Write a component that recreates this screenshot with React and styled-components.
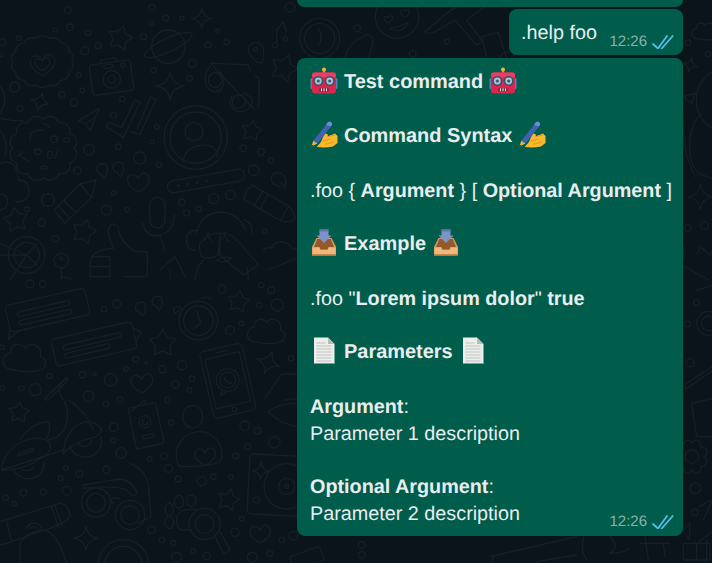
import React from 'react';
import styled, { createGlobalStyle } from 'styled-components';

const Global = createGlobalStyle`
  html, body { margin: 0; padding: 0; height: 100%; background: #0b141a; overflow: hidden; }
  #root { height: 100%; }
`;
const Page = styled.div`
  position: relative; width: 712px; height: 563px; overflow: hidden; background: #0b141a;
  font-family: "Liberation Sans", Arial, sans-serif; text-rendering: geometricPrecision;
`;
const Wall = styled.svg`
  position: absolute; inset: 0; width: 712px; height: 563px;
`;
const Thread = styled.div`
  position: relative; height: 100%; box-sizing: border-box; padding-right: 29px;
  display: flex; flex-direction: column; align-items: flex-end;
`;
const Stub = styled.div`
  width: 386px; height: 7px; background: #005c4b; border-radius: 0 0 8px 8px; margin-bottom: 2px;
`;
const Bubble = styled.div`
  position: relative; box-sizing: border-box; background: #005c4b; color: #e9edef;
  border-radius: 8px; font-size: 19.8px; line-height: 27px; white-space: nowrap;
  width: ${p => p.$w}px; height: ${p => p.$h}px; padding: ${p => p.$pad};
  margin-bottom: 3px;
`;
const TextLine = styled.div`
  height: 27px; line-height: 27px; white-space: pre;
`;
const Heading = styled.div`
  height: 27px; line-height: 27px; display: flex; align-items: center; gap: 6px;
  font-size: 19.95px; font-weight: 700; white-space: pre;
`;
const Blank = styled.div`height: ${p => p.$h || 27}px;`;
const B = styled.b`font-weight: 700;`;
const Meta = styled.div`
  position: absolute; right: 9px; bottom: ${p => p.$bottom}px; display: flex; align-items: center; gap: 5px;
  font-size: 15px; line-height: 16px; color: rgba(233, 237, 239, 0.6);
`;
const Doodles = styled.g`
  fill: none; stroke: #161f26; stroke-width: 4; stroke-linecap: round; stroke-linejoin: round;
`;
const Emoji = styled.svg`
  display: block; flex: none; width: 28px; height: 27px; margin-top: -4px;
`;

const Ticks = () => (
  <svg width="22" height="14" viewBox="0 0 22 14" fill="none" stroke="#53bdeb" strokeWidth="1.8" strokeLinecap="round" strokeLinejoin="round">
    <path d="M1 9 6 13.500 15 1" />
    <path d="M9.700 13.500 20.700 1" />
  </svg>
);

const Robot = () => (
  <Emoji viewBox="0 0 28 27">
    <rect x="0.500" y="11" width="3" height="11" rx="1.500" fill="#5b7fb8" />
    <rect x="24.500" y="11" width="3" height="11" rx="1.500" fill="#5b7fb8" />
    <rect x="12.800" y="3" width="2.400" height="4" fill="#8a9aa8" />
    <circle cx="14" cy="2.400" r="2" fill="#f5b62e" />
    <rect x="2" y="5.500" width="24" height="21" rx="3" fill="#d9264f" />
    <rect x="2" y="5.500" width="24" height="5" rx="2.500" fill="#ea3f63" />
    <circle cx="8.300" cy="14" r="5" fill="#3c4f68" />
    <circle cx="19.700" cy="14" r="5" fill="#3c4f68" />
    <circle cx="8.300" cy="14" r="3.400" fill="#a9c4d4" />
    <circle cx="19.700" cy="14" r="3.400" fill="#a9c4d4" />
    <circle cx="8.300" cy="14" r="1.600" fill="#3e5a70" />
    <circle cx="19.700" cy="14" r="1.600" fill="#3e5a70" />
    <rect x="9.500" y="21" width="9" height="3.400" rx="1" fill="#6d1733" />
    <path d="M11.500 21.300v3M14 21.300v3M16.500 21.300v3" stroke="#e9dde0" strokeWidth="1.200" />
  </Emoji>
);

const Writing = () => (
  <Emoji viewBox="0 0 28 27">
    <path d="M1 26 3.500 19.500 7.500 22.500Z" fill="#e8b33a" />
    <path d="M1 26 1.800 23.500 3.200 24.800Z" fill="#2a2a40" />
    <path d="M3.500 19.500 17 2.500 21 5.500 7.500 22.500Z" fill="#3d63b0" />
    <path d="M16 3.700 18 1.200Q19.500 0 21 1.200T22 4L20.600 5.500Z" fill="#6b8fd0" />
    <path d="M7 25.500 11 21 13 16 15.500 12.500 18 13.500 17.500 15.500 25 12.500 27.500 15 27.500 22 23 25.500Q15 27 7 26Z" fill="#fbb82c" />
    <path d="M13 20 21 18M15 23.500 24 21M18 15.500 25 14" stroke="#e39a1a" strokeWidth="1" fill="none" />
  </Emoji>
);

const Inbox = () => (
  <Emoji viewBox="0 0 28 27">
    <path d="M6.500 9H21.500L26 18V27H2V18Z" fill="#d99a5a" />
    <path d="M7.300 10H20.700L24 18H18.500L17.500 20.500H10.500L9.500 18H4Z" fill="#93592b" />
    <path d="M9.500 0.500H18.500V6.500H21.500L14 14 6.500 6.500H9.500Z" fill="#7e93c8" />
    <path d="M9.500 .500H18.500V2.500H9.500Z" fill="#5f74ad" />
    <path d="M2.500 18.500H9.200L10.200 21H17.800L18.800 18.500H25.500V25H2.500Z" fill="#eeb77c" />
    <path d="M2 25.500H26V27H2Z" fill="#b5743c" />
  </Emoji>
);

const PageIcon = () => (
  <Emoji viewBox="0 0 28 27">
    <path d="M4 0.500H18L24.500 7V27H4Z" fill="#eceeec" />
    <path d="M18 .5 24.500 7H18Z" fill="#b7bbb8" />
    <path d="M6.500 6h9M6.500 9h15M6.500 12h15M6.500 15h15M6.500 18h15M6.500 21h15M6.500 24h15" stroke="#bfc3c0" strokeWidth="1" />
    <path d="M4 26.500H24.500" stroke="#8f9490" strokeWidth="1" />
  </Emoji>
);

/* wallpaper helpers, all coordinates are in 1/3 px */
const scallop = (cx, cy, rx, ry, n) => {
  let d = '';
  for (let i = 0; i < n; i++) {
    const a = (i / n) * Math.PI * 2;
    const x = cx + rx * Math.cos(a), y = cy + ry * Math.sin(a);
    if (i === 0) d += `M${x} ${y}`;
    else d += `A${rx * 0.3} ${ry * 0.3} 0 0 1 ${x} ${y}`;
  }
  return d + `A${rx * 0.3} ${ry * 0.3} 0 0 1 ${cx + rx} ${cy}Z`;
};
const star = (cx, cy, r, rot = 0) => {
  let d = '';
  for (let i = 0; i < 10; i++) {
    const a = ((i * 36 - 90 + rot) * Math.PI) / 180;
    const q = i % 2 ? r * 0.55 : r;
    d += `${i ? 'L' : 'M'}${(cx + q * Math.cos(a)).toFixed(1)} ${(cy + q * Math.sin(a)).toFixed(1)}`;
  }
  return d + 'Z';
};
const spark = (cx, cy, r, rot = 0) => {
  const pt = (a, q) => {
    const t = ((a + rot) * Math.PI) / 180;
    return `${(cx + q * Math.cos(t)).toFixed(1)} ${(cy + q * Math.sin(t)).toFixed(1)}`;
  };
  return `M${pt(0, r)}Q${pt(45, r * 0.18)} ${pt(90, r)}Q${pt(135, r * 0.18)} ${pt(180, r)}Q${pt(225, r * 0.18)} ${pt(270, r)}Q${pt(315, r * 0.18)} ${pt(0, r)}Z`;
};
const heart = (x, y, s) =>
  `M${x} ${y + s * 0.9}C${x - s * 1.5} ${y + s * 0.1} ${x - s * 1.1} ${y - s} ${x - s * 0.3} ${y - s * 0.7}Q${x - s * 0.1} ${y - s * 0.6} ${x} ${y - s * 0.35}Q${x + s * 0.3} ${y - s * 1.1} ${x + s * 0.8} ${y - s * 0.8}C${x + s * 1.3} ${y - s * 0.4} ${x + s} ${y + s * 0.4} ${x} ${y + s * 0.9}Z`;
const cloud = (x, y, s) =>
  `M${x - s} ${y + s * 0.6}C${x - s * 1.5} ${y + s * 0.3} ${x - s * 1.2} ${y - s * 0.3} ${x - s * 0.8} ${y - s * 0.3}C${x - s * 0.9} ${y - s * 0.9} ${x - s * 0.2} ${y - s * 0.9} ${x} ${y - s * 0.6}C${x + s * 0.3} ${y - s} ${x + s} ${y - s * 0.8} ${x + s * 0.9} ${y - s * 0.1}C${x + s * 1.3} ${y} ${x + s * 1.3} ${y + s * 0.6} ${x + s * 0.8} ${y + s * 0.7}Q${x} ${y + s * 0.9} ${x - s} ${y + s * 0.6}Z`;
const quote = (x, y, s) =>
  `M${x} ${y + s}C${x - s * 1.1} ${y + s * 0.8} ${x - s * 1.1} ${y - s * 0.7} ${x + s * 0.2} ${y - s * 0.8}C${x + s * 1.2} ${y - s * 0.8} ${x + s * 1.1} ${y + s * 0.6} ${x + s * 0.6} ${y + s * 1.5}Q${x + s * 0.2} ${y + s * 1.8} ${x + s * 0.2} ${y + s * 1.4}Z`;

const topDots = [[203,30,10],[210,82,10],[166,90,6],[264,99,8],[254,152,12],[294,137,9],[56,115,7],[7,127,10],[4,166,5],[431,110,9],[455,70,6],[497,54,9],[546,54,6],[456,22,9],[624,135,9],[680,127,8],[652,92,5],[577,190,12],[460,211,8],[568,235,9],[236,225,7],[247,271,7],[44,261,15],[186,284,9],[222,307,11],[60,325,9],[367,297,8],[340,346,9],[470,380,7],[456,425,7],[355,440,8],[267,449,16],[419,474,18],[477,494,8],[232,512,11],[730,445,10],[783,455,10],[813,481,8],[761,511,16],[144,600,20],[341,579,7],[81,628,7],[319,630,15],[382,629,7],[125,668,11],[166,716,10],[546,607,10],[641,596,15],[691,585,14],[596,627,8],[560,639,9],[794,694,7],[870,22,14],[1071,85,10],[1341,125,8],[1238,162,10],[2064,128,8],[2124,162,8],[2063,684,10],[2113,677,12]];
const botDots = [[90,12,12],[128,12,10],[350,72,12],[312,88,8],[666,27,12],[784,15,8],[814,30,10],[778,76,8],[832,75,18],[725,130,7],[690,151,13],[6,202,7],[407,238,9],[438,248,4],[378,266,7],[488,268,11],[546,256,14],[576,296,8],[526,313,11],[568,330,7],[502,360,8],[248,284,10],[284,282,5],[332,299,19],[148,288,8],[64,325,8],[106,329,18],[7,323,7],[266,349,16],[360,359,8],[318,372,8],[341,442,13],[340,481,7],[363,519,16],[514,428,8],[734,437,14],[772,452,10],[743,500,9],[823,487,17],[707,528,9],[449,537,7],[493,528,10],[505,565,12],[198,565,7],[238,581,10],[182,594,7],[319,569,11],[200,632,13],[130,636,9],[70,638,10],[17,653,8],[43,671,7],[535,597,9],[605,603,14],[640,590,8],[693,590,7],[725,716,7],[455,750,11],[486,780,8],[520,789,8],[580,813,7],[620,828,11],[530,832,15],[705,757,12],[757,832,15],[810,820,9],[845,780,8],[873,235,8],[880,767,13],[2090,68,9],[2062,132,9],[2070,248,12],[2086,625,16],[2084,697,10],[1085,795,10],[1085,825,10]];

const Wallpaper = () => (
  <Wall viewBox="0 0 2136 1689" aria-hidden="true">
    <Doodles>
      {topDots.map(([x, y, r], i) => <circle key={i} cx={x} cy={y} r={r} />)}
      <path d={scallop(127, 185, 88, 72, 14)} />
      <path d={heart(127, 195, 36)} />
      <path d={heart(127, 192, 22)} />
      <g transform="rotate(-8 335 235)">
        <rect x="273" y="187" width="124" height="92" rx="10" />
        <path d="M305 187l8-11h40l8 11" />
        <circle cx="335" cy="238" r="26" /><circle cx="335" cy="238" r="11" />
        <ellipse cx="330" cy="198" rx="14" ry="6" /><circle cx="374" cy="200" r="6" />
      </g>
      <path d={star(360, 115, 38, 15)} />
      <path d={spark(605, 55, 30)} />
      <path d={spark(510, 258, 42)} />
      <path d={spark(120, 305, 28, 15)} />
      <circle cx="505" cy="140" r="50" />
      <ellipse cx="505" cy="135" rx="78" ry="20" transform="rotate(-25 505 135)" />
      <path d="M768 185C745 160 735 140 760 128 785 122 800 145 785 190Z" />
      <circle cx="767" cy="148" r="6" />
      <path d="M830 130V90L850 65 860 95M830 130a8 8 0 1 1-4-2M860 112a6 6 0 1 1-2-1" />
      <path d={star(852, 205, 42, 20)} />
      <path d="M630 190l110 4q12 8 10 22M640 190C610 215 605 260 640 275 680 280 675 225 660 215M640 200l125 130M695 290C680 320 710 345 740 330 770 310 755 285 730 280M765 230C780 225 780 250 775 320" />
      <path d="M625 240a20 22 0 1 0 40 0a20 22 0 1 0-40 0M697 305a20 20 0 1 0 40 0a20 20 0 1 0-40 0" />
      <path d="M298 325 235 362 258 372 270 392 Z" />
      <path d="M258 372 280 355" />
      <path d="M318 380 370 412 420 308 405 300 365 382 325 366ZM390 395 420 403 468 298 452 290 412 385" />
      <circle cx="587" cy="413" r="95" /><circle cx="587" cy="413" r="77" />
      <circle cx="582" cy="395" r="27" />
      <path d="M550 485C550 445 600 425 635 440 650 450 655 462 650 470" />
      <path d={scallop(130, 445, 92, 88, 12)} />
      <path d="M90 400q20-12 42-10M92 405l-2 20M130 370q15 5 20 12M55 455q5 20 35 30M50 470l20-15M175 445l-10 30M125 500q15-6 20 4-15 8-24 2Z" />
      <ellipse cx="113" cy="455" rx="10" ry="8" /><circle cx="162" cy="418" r="10" /><circle cx="200" cy="420" r="8" /><ellipse cx="150" cy="465" rx="7" ry="11" />
      <path d="M0 355q40 8 70 8M40 405q-15 15-8 35M0 490q30-10 45 10 8 18 12 40 28 0 30 35 0 30-40 30M0 390q25 30 15 80M0 580a18 20 0 0 1 0 50M0 260q28 30 0 80" />
      <path d={quote(305, 505, 18)} /><path d={quote(353, 500, 18)} />
      <path d={heart(415, 548, 32)} />
      <path d="M288 540 240 552 162 630 195 670 275 592ZM175 618 210 655M190 600l36 36M240 552 275 592" />
      <g transform="rotate(-10 617 540)">
        <rect x="500" y="525" width="235" height="36" rx="18" />
        <path d="M533 543h1M560 543h1M590 543h1M618 543h1" strokeWidth="8" />
      </g>
      <g transform="rotate(30 810 615)">
        <path d="M735 590H860Q890 600 895 615 890 632 860 640H735Q720 615 735 590ZM770 590V640M860 590V640M790 590V640" />
      </g>
      <path d="M840 560C810 555 805 525 830 518 855 518 862 540 855 562L842 548" />
      <path d={star(755, 393, 32, 10)} />
      <rect x="449" y="592" width="46" height="92" rx="23" />
      <path d="M425 668Q440 712 475 706 515 702 525 645M480 708 495 750" />
      <path d="M590 700Q600 640 660 636 720 640 735 690M590 690q-35 5-30 35t25 25M730 660q30 5 25 40" />
      <path d="M660 700q30-5 55 25 40 45 60 70l-45 30-70-60ZM660 700q-30-5-60 30-5 10 5 40 30 10 50-5ZM615 720l15-25M635 725l-15-25M665 720l15-25M685 725l-15-25M650 780q20 15 45-5-25-8-45 5ZM585 840q5-40 25-60M745 840q0-20-5-40" />
      <path d="M270 800Q270 770 285 760 310 745 340 745 325 710 325 690 335 660 355 680 355 720 405 755L440 755Q445 790 440 830H370M275 770h55v30h-55M270 800h60v30h-60v-30" />
      <path d="M480 810 525 770 555 830M510 840v-30" />
      <path d="M790 752q5-12 25-8 10-22 35-18 20 5 25 20 15 0 25 5M800 810 891 775" />
      <path d={star(48, 660, 38, -10)} />
      <path d={star(252, 695, 38, 15)} />
      <circle cx="80" cy="765" r="55" /><circle cx="80" cy="765" r="38" />
      <path d="M0 730 80 765 30 840M80 765H0M80 765 110 730M80 765 112 795" />
      <circle cx="184" cy="782" r="22" /><circle cx="184" cy="776" r="5" />
      <path d="M184 804V840M184 830l30 6" />
      <circle cx="959" cy="115" r="60" /><circle cx="959" cy="115" r="45" />
      <path d="M955 85q18 35-2 50" />
      <circle cx="1191" cy="50" r="65" />
      <path d={heart(1165, 58, 12)} /><path d={heart(1215, 40, 13)} />
      <path d="M1170 85q35 20 55-18-30 15-55 18Z" />
      <path d="M1275 95 1340 40 1385 10M1275 95q12 10 30 0l60-35 60 70q15 10 20-10l-45-60 60-45" />
      <path d="M1035 172q20-55 55-60 5-15 25-3 8 20 0 32l-10 35" />
      <path d="M1460 170l-15-60 50-12 25 75M1500 172q10-20 30-15M1540 170q10-25 30-20" />
      <path d={cloud(2116, 95, 32)} />
      <path d={spark(2071, 195, 22, 15)} />
      <ellipse cx="2165" cy="300" rx="76" ry="90" />
      <path d="M2105 340C2060 380 2060 480 2090 515 2110 530 2130 530 2150 540M2050 360C2050 400 2050 460 2085 530" />
      <path d="M2050 290l25 20 10-30Z" />
      <path d={spark(2101, 590, 38)} />
      <path d="M2100 740l30 25 20-40M2090 760q15-25 25-10M2040 725q25 30 0 70M2055 800q30 20 70 40" />
      <g transform="translate(0 840)">
        {botDots.map(([x, y, r], i) => <circle key={i} cx={x} cy={y} r={r} />)}
        <g transform="rotate(-13 140 90)">
          <rect x="20" y="50" width="245" height="82" rx="12" />
          <path d="M20 120 8 150 45 133M58 77H205a7 7 0 0 1 0 14H58a7 7 0 0 1 0-14ZM58 103H205a7 7 0 0 1 0 14H58a7 7 0 0 1 0-14Z" />
        </g>
        <g transform="rotate(-13 285 190)">
          <rect x="158" y="150" width="248" height="82" rx="12" />
          <path d="M405 170 428 190 405 210M195 175H360a7 7 0 0 1 0 14H195a7 7 0 0 1 0-14ZM195 200H320a7 7 0 0 1 0 14H195a7 7 0 0 1 0-14Z" />
        </g>
        <path d={star(488, 190, 42, 0)} />
        <path d={star(715, 65, 34, 10)} />
        <path d={star(57, 398, 32, 5)} />
        <path d={star(685, 660, 34, 15)} />
        <path d={cloud(75, 235, 52)} />
        <path d={cloud(800, 155, 46)} />
        <path d={heart(425, 310, 32)} />
        <path d={quote(420, 80, 17)} /><path d={quote(470, 62, 17)} />
        <circle cx="595" cy="122" r="58" /><circle cx="595" cy="122" r="44" />
        <path d="M590 92l12 38-22 18M520 85q15-10 25 0l-20 15ZM605 55q15-8 28 2" />
        <g transform="rotate(-13 683 300)">
          <rect x="618" y="200" width="130" height="205" rx="14" />
          <rect x="630" y="225" width="106" height="152" rx="4" />
          <path d="M665 213h35" />
          <circle cx="683" cy="391" r="7" />
          <circle cx="683" cy="300" r="34" /><circle cx="683" cy="300" r="24" />
          <path d="M660 325l-8 16 20-8M675 290q0 20 18 22" />
        </g>
        <path d={spark(805, 248, 36, 20)} />
        <path d="M795 355 845 282H891M891 358q-25-3-38 4M805 395q35 35 86 45M805 395q30-25 86-25" />
        <path d="M135 355 200 295M135 355q-5 5 10 5l60-60-5-8ZM180 315q-10 25 15 50 15 40 0 80-20 30-50 35M205 360q50 30 75 90" />
        <path d="M5 565C10 510 70 470 120 475 160 480 160 510 130 530 90 560 40 570 5 572ZM55 520l45-15v8l-45 15ZM60 480q30-50 85-55 10 20-5 50M190 520q5-80 70-95 30 0 45 25-5 20-35 25-45 10-80 45ZM5 570 190 510" />
        <path d="M40 565a45 40 0 0 0 90-20M210 500a46 44 0 0 0 92-30M235 490a22 22 0 0 0 40-10M65 568q20 10 35-5" />
        <g transform="rotate(-12 437 435)">
          <rect x="395" y="375" width="85" height="125" rx="8" />
          <path d="M395 390 450 360V375M420 465h35v10h-35z" />
          <circle cx="437" cy="425" r="18" />
          <path d="M437 418a8 8 0 1 0 8 8" />
        </g>
        <ellipse cx="578" cy="410" rx="30" ry="34" />
        <path d="M530 540C520 490 560 455 597 455 640 455 670 490 665 535 660 555 600 560 545 560 535 560 532 550 530 540Z" />
        <path d={heart(615, 530, 30)} />
        <path d="M250 615 360 597Q395 600 412 640 400 655 385 635 370 615 250 625ZM390 550q50 20 55 70l8 90-40 20M340 670q-20-20 20-15" />
        <circle cx="288" cy="668" r="44" /><circle cx="288" cy="668" r="28" />
        <circle cx="390" cy="705" r="44" /><circle cx="390" cy="705" r="28" />
        <ellipse cx="537" cy="665" rx="14" ry="19" /><ellipse cx="574" cy="662" rx="14" ry="17" /><ellipse cx="508" cy="688" rx="12" ry="19" /><ellipse cx="508" cy="728" rx="13" ry="18" />
        <path d="M575 750H550Q530 750 530 720 530 690 565 688H590" />
        <circle cx="614" cy="732" r="47" /><circle cx="614" cy="732" r="28" />
        <path d="M645 770 672 822 690 810 660 755" />
        <g transform="rotate(3 820 620)">
          <rect x="745" y="525" width="180" height="180" rx="14" />
          <circle cx="860" cy="617" r="68" /><circle cx="860" cy="617" r="24" /><circle cx="860" cy="617" r="6" />
          <path d={spark(780, 575, 26)} />
          <circle cx="772" cy="663" r="9" />
        </g>
        <path d="M0 725 180 670Q205 670 210 710 200 730 120 755L20 790 0 795M20 725l15 60M155 680l22 65M165 678l22 62" />
        <path d="M80 745a24 24 0 0 1 45 0M92 745a12 12 0 0 1 20 0M60 849V790Q80 755 130 750 170 755 200 849" />
        <path d={spark(258, 775, 36)} />
        <circle cx="370" cy="855" r="76" /><circle cx="370" cy="855" r="56" />
        <path d={heart(780, 762, 30)} />
        <path d="M2060 310 2090 290 2170 240M2060 325 2140 270M2060 335q-10-15 0-25M2090 30 2160 10" />
        <path d="M2075 370 2160 350V470H2090Z" />
        <circle cx="2126" cy="130" r="36" /><circle cx="2126" cy="130" r="22" />
        <path d={scallop(2076, 530, 36, 40, 8)} />
        <circle cx="2076" cy="530" r="20" />
        <path d="M2100 680 2130 660M2110 720 2136 660" />
        <path d="M2070 730l-2 50-20-30ZM2090 790 2136 755M2090 840V790M2120 840V780" />
        <path d="M1470 830 1730 770M1475 850l5-22M1610 845 1730 825" />
        <path d="M1760 750q-25 50 0 90M1830 770q30 30 0 50 40 0 60-15M1920 790h90M1935 770l10 70M1990 790l5 40" />
        <rect x="2050" y="790" width="80" height="50" rx="5" />
        <g transform="rotate(-20 930 825)"><rect x="870" y="810" width="95" height="45" rx="6" /></g>
      </g>
    </Doodles>
  </Wall>
);

export default function App() {
  return (
    <Page>
      <Global />
      <Wallpaper />
      <Thread>
        <Stub />
        <Bubble $w={174} $h={46} $pad="11px 12px 0">
          <TextLine>.help foo</TextLine>
          <Meta $bottom={5}>12:26<Ticks /></Meta>
        </Bubble>
        <Bubble $w={386} $h={478} $pad="11px 13px 0">
          <Heading><Robot />Test command<Robot /></Heading>
          <Blank />
          <Heading><Writing />Command Syntax<Writing /></Heading>
          <Blank $h={28} />
          <TextLine>.foo {'{'} <B>Argument</B> {'}'} [ <B>Optional Argument</B> ]</TextLine>
          <Blank $h={26} />
          <Heading><Inbox />Example<Inbox /></Heading>
          <Blank $h={28} />
          <TextLine>.foo "<B>Lorem ipsum dolor</B>" <B>true</B></TextLine>
          <Blank $h={26} />
          <Heading><PageIcon />Parameters<PageIcon /></Heading>
          <Blank $h={28} />
          <TextLine><B>Argument</B>:</TextLine>
          <TextLine>Parameter 1 description</TextLine>
          <Blank $h={26} />
          <TextLine><B>Optional Argument</B>:</TextLine>
          <TextLine>Parameter 2 description</TextLine>
          <Meta $bottom={6}>12:26<Ticks /></Meta>
        </Bubble>
      </Thread>
    </Page>
  );
}
